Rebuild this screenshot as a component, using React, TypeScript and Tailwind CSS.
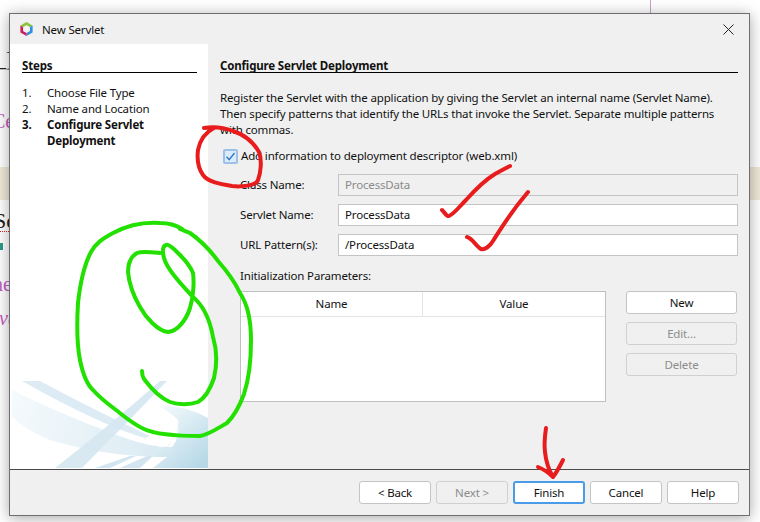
const uiFont = "font-['Noto_Sans',sans-serif] text-[11.5px] leading-4 tracking-[-0.16px] text-[#111]";

function FormRow({ label, value, disabled }: { label: string; value: string; disabled?: boolean }) {
  return (
    <div className="flex items-center h-[22px]">
      <span className="w-[118px] pl-5 shrink-0 whitespace-nowrap">{label}</span>
      <div
        className={`flex-1 h-[22px] border border-[#c4c4c4] px-1.5 flex items-center ${
          disabled ? "bg-[#f0f0f0] text-[#8a8a8a]" : "bg-white"
        }`}
      >
        {value}
      </div>
    </div>
  );
}

function Btn({
  label,
  disabled,
  focused,
  className = "",
}: {
  label: string;
  disabled?: boolean;
  focused?: boolean;
  className?: string;
}) {
  return (
    <button
      className={`h-[23px] rounded-[3px] border flex items-center justify-center ${
        disabled
          ? "border-[#d0d0d0] bg-[#f0f0f0] text-[#8c8c8c]"
          : focused
            ? "border-2 border-[#4a9be8] bg-white"
            : "border-[#c4c4c4] bg-white"
      } ${className}`}
    >
      {label}
    </button>
  );
}

function SideArt() {
  return (
    <svg className="absolute left-0 bottom-0" width="198" height="94" viewBox="10 375 198 94">
      <defs>
        <linearGradient id="sweep" x1="12" y1="395" x2="208" y2="450" gradientUnits="userSpaceOnUse">
          <stop offset="0" stopColor="#f5fafc" />
          <stop offset="0.5" stopColor="#e4f0f6" />
          <stop offset="1" stopColor="#d2e6f0" />
        </linearGradient>
        <linearGradient id="blob" x1="160" y1="405" x2="208" y2="460" gradientUnits="userSpaceOnUse">
          <stop offset="0" stopColor="#f6fbfd" />
          <stop offset="1" stopColor="#b6d8e7" />
        </linearGradient>
      </defs>
      <path d="M12 390 Q60 414 117 435 Q140 444 157 446 L157 457 Q100 455 50 440 Q25 430 12 417 Z" fill="url(#sweep)" />
      <path d="M22 381 L40 381 Q90 408 150 436 L145 438 Q100 425 22 381 Z" fill="#dcebf4" />
      <path d="M160 381 L167 381 Q125 425 82 468 L55 468 Q110 425 160 381 Z" fill="#d5e7f1" fillOpacity="0.9" />
      <path d="M157 405 Q187 406 208 418 L208 468 L153 468 L167 457 L157 457 L157 446 L167 447 Q180 430 178 420 Q170 412 157 405 Z" fill="url(#blob)" />
      <path d="M95 468 L130 456 L136 456 L110 468 Z M120 468 L147 456 L153 456 L140 468 Z" fill="#d2e5f0" />
      <path d="M158 447 L172 434 L170 441 L163 447 Z M168 447 L179 427 L176 441 L172 447 Z" fill="#ffffff" />
    </svg>
  );
}

function Annotations() {
  return (
    <svg className="absolute inset-0 pointer-events-none" width="760" height="522" viewBox="0 0 760 522" fill="none" strokeLinecap="round" strokeLinejoin="round">
      <g stroke="#22e000" strokeWidth="4">
        <path d="M182 229 C176 225 170 223 160 223 C145 222 128 225 113 233 C102 239 96 243 91 252 C84 265 80 285 78 303 C77 320 77 345 80 360 C83 375 87 385 94 391 C100 398 108 404 116 410 C125 417 133 424 144 429 C155 434 175 436 200 436 C208 435 218 428 227 423 C234 416 240 405 244 394 C248 382 251 360 251 340 C251 322 248 305 240 293 C234 280 226 270 218 261 C210 250 200 240 190 233 C186 231 182 230 180 229" />
        <path d="M160 253 C150 252 142 251 137 253 C130 257 128 265 128 272 C129 283 133 295 140 307 C146 318 158 331 168 332 C178 331 186 320 190 308 C194 295 194 280 193 273 C189 263 183 258 177 252 C172 247 168 244 166 245 C163 246 162 250 164 258 C167 269 180 283 192 296 C203 305 210 320 213 337 C217 350 217 365 214 378 C210 390 205 398 198 402 C190 405 178 405 170 402 C160 398 150 387 144 379 C142 376 142 373 142 371" />
      </g>
      <g stroke="#e81c1c" strokeWidth="4">
        <path d="M204 128 C215 126 225 128 233 131 C245 135 254 143 259 152 C262 160 261 172 258 180 M258 180 C256 186 240 187 232 186 C220 184 208 182 203 175 C198 168 197 158 198 150 C200 140 206 132 214 128" />
        <path d="M442 210 C445 213 447 217 449 216 C454 214 460 206 466 200 C475 190 485 180 495 174 C502 170 506 168 510 166" />
        <path d="M467 237 C472 238 476 246 481 249 C485 250 490 246 493 241 C500 230 510 213 528 192" />
        <path d="M546 428 C545 435 544 445 545 452 C546 462 550 472 553 477 M538 467 C543 469 549 473 553 477 C557 472 560 466 563 460" />
      </g>
    </svg>
  );
}

export default function App() {
  return (
    <div className="relative w-[760px] h-[522px] bg-white overflow-hidden">
      {/* whatever is behind the dialog */}
      <div className="absolute left-[650px] top-0 w-px h-[14px] bg-[#c9a0c9]" />
      <div className="absolute left-0 top-[167px] w-[760px] h-[33px] bg-[#efe9d8]" />
      <span className="absolute left-[-4px] top-[44px] font-['Liberation_Serif',serif] text-[20px] text-[#222]">_]</span>
      <span className="absolute left-[-8px] top-[106px] font-['Liberation_Serif',serif] text-[20px] text-[#c45cc4]">Ce</span>
      <span className="absolute left-[-6px] top-[204px] font-['Liberation_Serif',serif] text-[22px] text-[#222]">Se</span>
      <div className="absolute left-0 top-[231px] w-[9px] border-t border-dotted border-[#e02020]" />
      <div className="absolute left-0 top-[243px] w-[3px] h-[7px] bg-[#2f9a8a]" />
      <span className="absolute left-[-7px] top-[269px] font-['Liberation_Serif',serif] text-[20px] text-[#c45cc4]">ne</span>
      <span className="absolute left-[-1px] top-[303px] italic font-['Liberation_Serif',serif] text-[20px] text-[#c45cc4]">va</span>

      {/* dialog */}
      <div className={`absolute left-[9px] top-[13px] w-[741px] h-[503px] flex flex-col border border-[#6e6e6e] bg-[#f0f0f0] shadow-[0_2px_14px_rgba(0,0,0,0.35)] ${uiFont}`}>
        <div className="h-[30px] shrink-0 flex items-center pl-[9px] pr-[15px]">
          <svg width="15" height="16" viewBox="0 0 16 16" className="shrink-0">
            <path d="M8 0.5 L14.5 4.2 L11.5 6 L8 4 L4.5 6 L1.5 4.2 Z" fill="#8cc63f" />
            <path d="M14.5 4.2 L14.5 11.8 L8 15.5 L8 12 L11.5 10 L11.5 6 Z" fill="#2f8fe0" />
            <path d="M1.5 4.2 L1.5 11.8 L8 15.5 L8 12 L4.5 10 L4.5 6 Z" fill="#d11d5f" />
            <path d="M8 4 L11.5 6 L11.5 10 L8 12 L4.5 10 L4.5 6 Z" fill="#f4f4f4" />
          </svg>
          <span className="ml-2 pt-[2px]">New Servlet</span>
          <svg width="11" height="11" viewBox="0 0 11 11" className="ml-auto" stroke="#222" strokeWidth="1">
            <path d="M0.5 0.5 L10.5 10.5 M10.5 0.5 L0.5 10.5" />
          </svg>
        </div>

        <div className="flex-1 flex min-h-0">
          <div className="relative w-[198px] shrink-0 bg-white pl-3 pr-[11px] pt-3.5">
            <div className="font-bold border-b border-black h-[15px] leading-[15px]">Steps</div>
            <ol className="mt-3">
              <li className="flex"><span className="w-[25px]">1.</span>Choose File Type</li>
              <li className="flex"><span className="w-[25px]">2.</span>Name and Location</li>
              <li className="flex font-bold"><span className="w-[25px] shrink-0">3.</span><span>Configure Servlet Deployment</span></li>
            </ol>
            <SideArt />
          </div>

          <div className="flex-1 pl-3 pr-[11px] pt-3.5 min-w-0">
            <div className="font-bold border-b border-black h-[15px] leading-[15px]">Configure Servlet Deployment</div>
            <p className="mt-[17px]">
              Register the Servlet with the application by giving the Servlet an internal name (Servlet Name).
              <br />
              Then specify patterns that identify the URLs that invoke the Servlet. Separate multiple patterns
              <br />
              with commas.
            </p>
            <div className="flex items-center mt-2.5 h-4">
              <span className="w-[15px] h-[15px] ml-[3px] rounded-[2px] border-2 border-[#9cc0e6] bg-[#dcebfa] flex items-center justify-center shrink-0">
                <svg width="11" height="11" viewBox="0 0 11 11" fill="none" stroke="#2c7bd0" strokeWidth="1.4">
                  <path d="M1.5 5.8 L4.2 8.6 L9.5 2" />
                </svg>
              </span>
              <span className="ml-[3px]">Add information to deployment descriptor (web.xml)</span>
            </div>
            <div className="mt-2.5 flex flex-col gap-2">
              <FormRow label="Class Name:" value="ProcessData" disabled />
              <FormRow label="Servlet Name:" value="ProcessData" />
              <FormRow label="URL Pattern(s):" value="/ProcessData" />
            </div>
            <div className="pl-5 mt-3">Initialization Parameters:</div>
            <div className="flex pl-5 mt-[7px]">
              <div className="w-[366px] h-[111px] border border-[#c0c0c0] bg-white shrink-0">
                <div className="flex h-[25px] border-b border-[#e4e4e4]">
                  <div className="w-[182px] border-r border-[#e4e4e4] flex items-center justify-center">Name</div>
                  <div className="flex-1 flex items-center justify-center">Value</div>
                </div>
              </div>
              <div className="ml-5 w-[111px] flex flex-col gap-2">
                <Btn label="New" />
                <Btn label="Edit..." disabled />
                <Btn label="Delete" disabled />
              </div>
            </div>
          </div>
        </div>

        <div className="h-[46px] shrink-0 border-t border-[#4a4a4a] flex items-start justify-end gap-[5px] pt-[11px] pr-[10px]">
          <Btn label="< Back" className="w-[72px]" />
          <Btn label="Next >" disabled className="w-[72px]" />
          <Btn label="Finish" focused className="w-[72px]" />
          <Btn label="Cancel" className="w-[72px]" />
          <Btn label="Help" className="w-[72px]" />
        </div>
      </div>

      <Annotations />
    </div>
  );
}
